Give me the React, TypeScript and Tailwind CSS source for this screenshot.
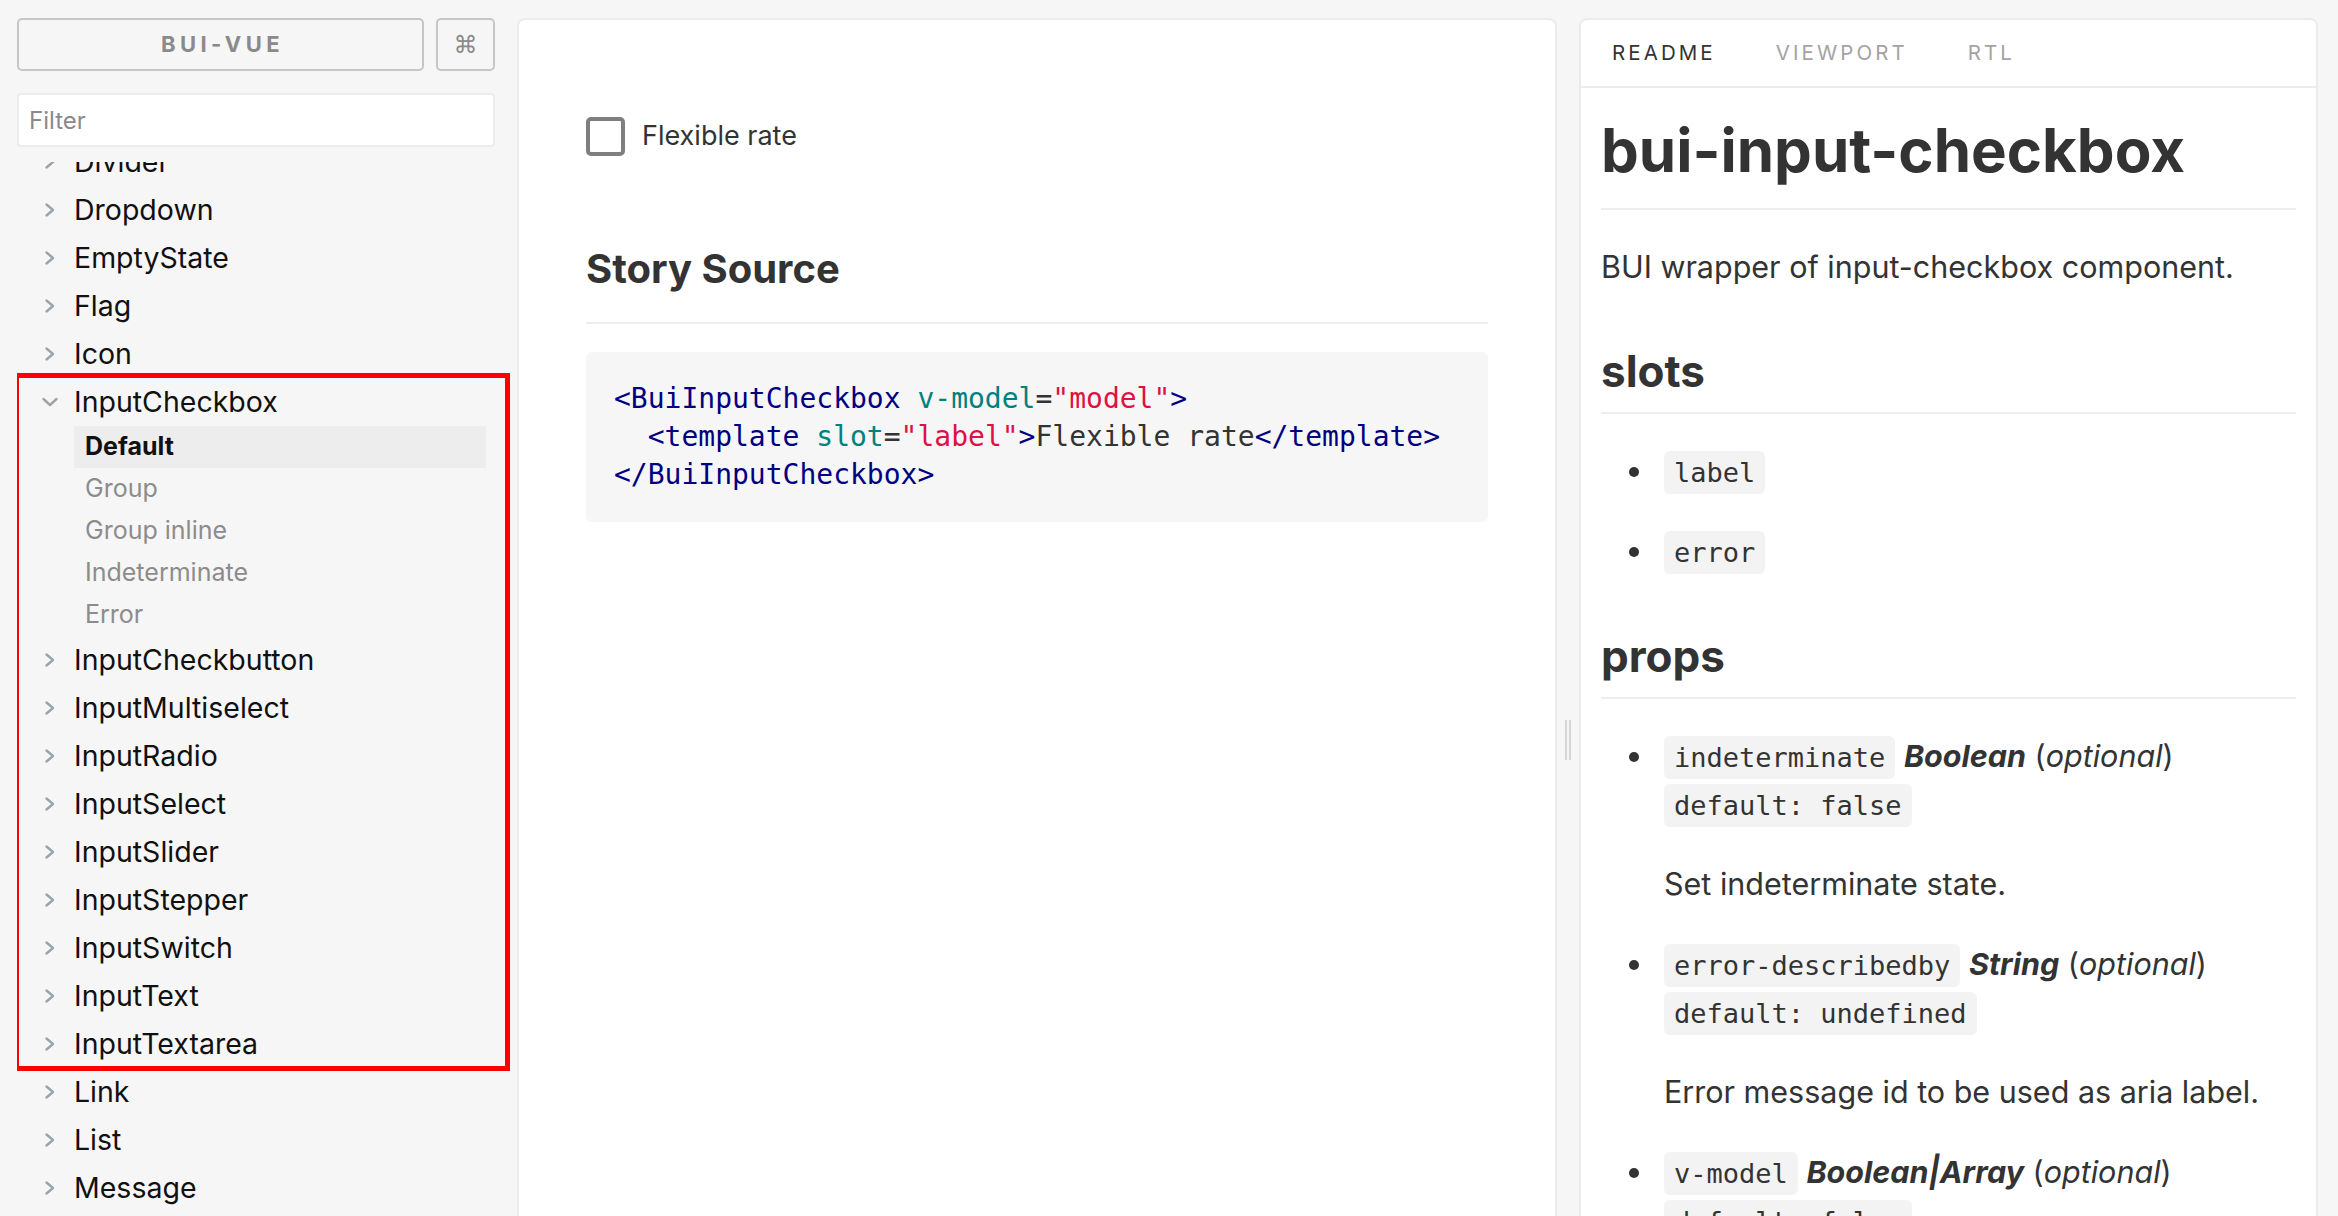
import React from "react";

const BEFORE = ["Divider", "Dropdown", "EmptyState", "Flag", "Icon"];
const STORIES = ["Default", "Group", "Group inline", "Indeterminate", "Error"];
const GROUP = [
  "InputCheckbutton",
  "InputMultiselect",
  "InputRadio",
  "InputSelect",
  "InputSlider",
  "InputStepper",
  "InputSwitch",
  "InputText",
  "InputTextarea",
];
const AFTER = ["Link", "List", "Message", "Modal"];

function Chevron({ open }: { open?: boolean }) {
  return (
    <svg
      width="16"
      height="16"
      viewBox="0 0 16 16"
      fill="none"
      stroke="#9ba3ab"
      strokeWidth="2.4"
      strokeLinecap="round"
      strokeLinejoin="round"
      className="shrink-0"
    >
      {open ? <path d="M1.5 5L8 11l6.5-6" /> : <path d="M4.5 2.5L11 8l-6.5 5.5" />}
    </svg>
  );
}

function NavItem({ label, open }: { label: string; open?: boolean }) {
  return (
    <div className="flex h-[48px] items-center pl-[25px] text-[28.5px] text-[#111]">
      <Chevron open={open} />
      <span className="ml-[16px] whitespace-nowrap">{label}</span>
    </div>
  );
}

function Sidebar() {
  return (
    <aside className="flex h-[1198px] w-[500px] shrink-0 flex-col">
      <div className="flex w-[478px] gap-[12px]">
        <button className="flex h-[53px] flex-1 items-center justify-center rounded-[5px] border-2 border-[#c6c6c6] pl-[4px] text-[22px] font-bold tracking-[0.2em] text-[#8a8a8a]">
          BUI-VUE
        </button>
        <button className="flex h-[53px] w-[59px] items-center justify-center rounded-[5px] border-2 border-[#c6c6c6] font-['DejaVu_Sans',sans-serif] text-[24px] text-[#8a8a8a]">
          ⌘
        </button>
      </div>
      <input
        placeholder="Filter"
        className="mt-[22px] h-[54px] w-[478px] rounded-[4px] border-2 border-[#ececec] bg-white pl-[10px] text-[24px] text-[#333] outline-none placeholder:text-[#8a8a8a]"
      />
      <nav className="mt-[15px] min-h-0 flex-1 overflow-hidden">
        <div className="-mt-[24px] w-[478px]">
          {BEFORE.map((l) => (
            <NavItem key={l} label={l} />
          ))}

          {/* highlighted group */}
          <div className="relative">
            <NavItem label="InputCheckbox" open />
            {STORIES.map((s, i) => (
              <div
                key={s}
                className={`ml-[57px] mr-[9px] flex h-[42px] items-center pl-[11px] text-[25px] ${
                  i === 0 ? "bg-[#ededed] font-bold text-[#111]" : "text-[#8c8c8c]"
                }`}
              >
                {s}
              </div>
            ))}
            {GROUP.map((l) => (
              <NavItem key={l} label={l} />
            ))}
            <span className="pointer-events-none absolute -top-[5px] -right-[15px] -bottom-[3px] -left-[3px] border-[5px] border-[#ff0000]" />
          </div>

          {AFTER.map((l) => (
            <NavItem key={l} label={l} />
          ))}
        </div>
      </nav>
    </aside>
  );
}

function CenterPanel() {
  return (
    <main className="h-[1444px] w-[1040px] shrink-0 rounded-[8px] border-2 border-[#ebebeb] bg-white px-[67px] pt-[96px]">
      <label className="flex items-center gap-[17px]">
        <span className="h-[39px] w-[39px] rounded-[5px] border-[4px] border-[#7f7f7f]" />
        <span className="text-[27px] text-[#333]">Flexible rate</span>
      </label>

      <h2 className="mt-[86px] border-b-2 border-[#eeeeee] pb-[27px] text-[40px] leading-[52px] font-bold text-[#333]">
        Story Source
      </h2>

      <pre className="mt-[28px] rounded-[6px] bg-[#f6f6f6] p-[28px] font-['DejaVu_Sans_Mono',monospace] text-[28px] leading-[38px] text-[#333]">
        <span className="text-[#000080]">&lt;BuiInputCheckbox</span>{" "}
        <span className="text-[#008080]">v-model</span>=
        <span className="text-[#dd1144]">"model"</span>
        <span className="text-[#000080]">&gt;</span>
        {"\n  "}
        <span className="text-[#000080]">&lt;template</span>{" "}
        <span className="text-[#008080]">slot</span>=
        <span className="text-[#dd1144]">"label"</span>
        <span className="text-[#000080]">&gt;</span>Flexible rate
        <span className="text-[#000080]">&lt;/template&gt;</span>
        {"\n"}
        <span className="text-[#000080]">&lt;/BuiInputCheckbox&gt;</span>
      </pre>
    </main>
  );
}

function Gutter() {
  return (
    <div className="flex h-[1444px] w-[22px] shrink-0 items-center justify-center gap-[2px]">
      <span className="h-[40px] w-[2px] bg-[#d6d6d6]" />
      <span className="h-[40px] w-[2px] bg-[#d6d6d6]" />
    </div>
  );
}

function Code({ children }: { children: React.ReactNode }) {
  return (
    <code className="inline-block rounded-[6px] bg-[#f3f3f3] px-[10px] font-['DejaVu_Sans_Mono',monospace] text-[27px] leading-[43px] text-[#333]">
      {children}
    </code>
  );
}

function Bullet() {
  return <span className="absolute top-[20px] -left-[35px] h-[10px] w-[10px] rounded-full bg-[#333]" />;
}

const PROPS = [
  { name: "indeterminate", type: "Boolean", def: "default: false", desc: "Set indeterminate state." },
  {
    name: "error-describedby",
    type: "String",
    def: "default: undefined",
    desc: "Error message id to be used as aria label.",
  },
  { name: "v-model", type: "Boolean|Array", def: "default: false", desc: "Model value." },
];

function ReadmePanel() {
  return (
    <section className="h-[1444px] w-[739px] shrink-0 overflow-hidden rounded-[8px] border-2 border-[#ebebeb] bg-white">
      <div className="flex h-[68px] items-center border-b-2 border-[#ececec] text-[20.5px] tracking-[0.15em]">
        <span className="pr-[30px] pl-[31px] text-[#333]">README</span>
        <span className="px-[30px] text-[#a3a3a3]">VIEWPORT</span>
        <span className="px-[30px] text-[#a3a3a3]">RTL</span>
      </div>

      <div className="px-[20px] text-[#333]">
        <h1 className="mt-[24px] border-b-2 border-[#eeeeee] pb-[20px] text-[60px] leading-[76px] font-bold">
          bui-input-checkbox
        </h1>
        <p className="mt-[34px] text-[30.5px] leading-[46px]">BUI wrapper of input-checkbox component.</p>

        <h2 className="mt-[56px] border-b-2 border-[#eeeeee] pb-[15px] text-[44px] leading-[51px] font-bold">
          slots
        </h2>
        <ul className="mt-[33px] flex flex-col gap-[32px] pl-[63px] text-[30.5px] leading-[48px]">
          {["label", "error"].map((s) => (
            <li key={s} className="relative">
              <Bullet />
              <Code>{s}</Code>
            </li>
          ))}
        </ul>

        <h2 className="mt-[56px] border-b-2 border-[#eeeeee] pb-[15px] text-[44px] leading-[51px] font-bold">
          props
        </h2>
        <ul className="mt-[33px] flex flex-col gap-[32px] pl-[63px] text-[30.5px] leading-[48px]">
          {PROPS.map((p) => (
            <li key={p.name} className="relative">
              <Bullet />
              <Code>{p.name}</Code>{" "}
              <strong className="font-bold italic">{p.type}</strong> (<em>optional</em>)
              <br />
              <Code>{p.def}</Code>
              <p className="mt-[32px]">{p.desc}</p>
            </li>
          ))}
        </ul>
      </div>
    </section>
  );
}

export default function App() {
  return (
    <div className="flex h-screen w-full items-start overflow-hidden bg-[#f6f6f6] pt-[18px] pl-[17px] font-['Inter',sans-serif] text-[#333]">
      <Sidebar />
      <CenterPanel />
      <Gutter />
      <ReadmePanel />
    </div>
  );
}
